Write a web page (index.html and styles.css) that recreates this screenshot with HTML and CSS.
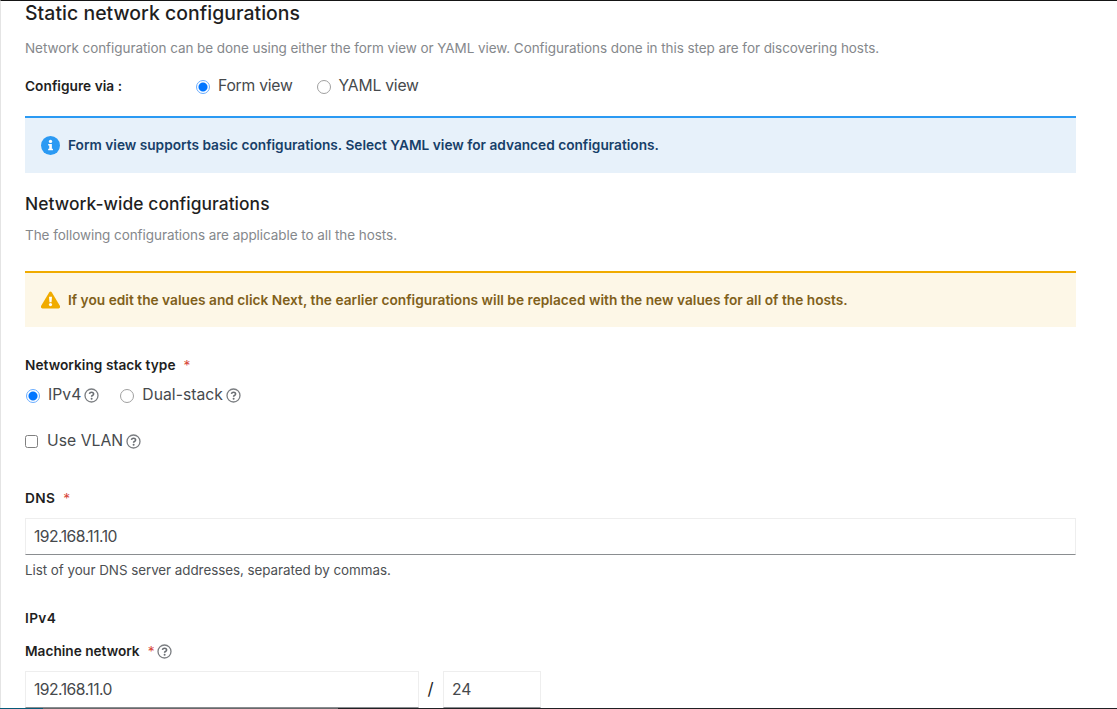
FILE: index.html
```html
<!DOCTYPE html>
<html lang="en">
<head>
<meta charset="utf-8">
<title>Static network configurations</title>
<link rel="stylesheet" href="styles.css">
</head>
<body>
<svg class="defs" aria-hidden="true">
  <symbol id="help" viewBox="0 0 15 15">
    <circle cx="7.5" cy="7.5" r="6.5" fill="none" stroke="#7b7e82" stroke-width="1.3"/>
    <path d="M5.4 5.9Q5.8 4.2 7.5 4.2Q9.6 4.2 9.6 6Q9.6 7 8.4 7.5Q7.6 7.9 7.6 8.7" fill="none" stroke="#6a6e73" stroke-width="1.6"/>
    <circle cx="7.6" cy="10.7" r="1" fill="#6a6e73"/>
  </symbol>
</svg>
<main class="page">
  <h1 class="title">Static network configurations</h1>
  <p class="lead">Network configuration can be done using either the form view or YAML view. Configurations done in this step are for discovering hosts.</p>
  <div class="configure">
    <span class="label configure-label">Configure via :</span>
    <label class="option"><span class="radio checked"></span><span class="option-text tight">Form view</span></label>
    <label class="option yaml"><span class="radio"></span><span class="option-text tight">YAML view</span></label>
  </div>
  <div class="alert info">
    <svg class="alert-icon" viewBox="0 0 18 18"><circle cx="9" cy="9" r="9" fill="#2b9af3"/><circle cx="9" cy="5.1" r="1.6" fill="#fff"/><path d="M6.8 7.5h3.5v4.5h1v1.6H6.8V12h1V9.1h-1z" fill="#fff"/></svg>
    <span class="alert-info-text">Form view supports basic configurations. Select YAML view for advanced configurations.</span>
  </div>
  <h2 class="subtitle">Network-wide configurations</h2>
  <p class="applies">The following configurations are applicable to all the hosts.</p>
  <div class="alert warning">
    <svg class="alert-icon" viewBox="0 0 18 18"><path d="M7.7 1.4Q9 -.4 10.3 1.4L18 14.3Q18.5 16.2 16.7 16.5H1.3Q-.5 16.2 0 14.3Z" fill="#f0ab00"/><path d="M7.6 5.5h2.8L10 10.6H8z" fill="#fff"/><circle cx="9" cy="12.9" r="1.5" fill="#fff"/></svg>
    <span class="alert-warning-text">If you edit the values and click Next, the earlier configurations will be replaced with the new values for all of the hosts.</span>
  </div>
  <div class="label stack-label">Networking stack type<span class="required">*</span></div>
  <div class="stack">
    <label class="option"><span class="radio checked"></span><span class="option-text">IPv4</span><svg class="help"><use href="#help"/></svg></label>
    <label class="option dual"><span class="radio"></span><span class="option-text">Dual-stack</span><svg class="help"><use href="#help"/></svg></label>
  </div>
  <label class="vlan"><span class="checkbox"></span><span class="option-text">Use VLAN</span><svg class="help"><use href="#help"/></svg></label>
  <div class="label dns-label"><span class="caps">DNS</span><span class="required">*</span></div>
  <div class="input">192.168.11.10</div>
  <p class="hint">List of your DNS server addresses, separated by commas.</p>
  <div class="label ip-label"><span class="caps">IPv4</span></div>
  <div class="label machine-label">Machine network<span class="required">*</span><svg class="help"><use href="#help"/></svg></div>
  <div class="network">
    <div class="input address">192.168.11.0</div>
    <span class="slash">/</span>
    <div class="input prefix">24</div>
  </div>
</main>
<footer class="edge"><span class="edge-teal"></span><span class="edge-gray"></span></footer>
</body>
</html>
```
FILE: styles.css
```css
* { box-sizing: border-box; }
body {
  margin: 0;
  height: 709px;
  overflow: hidden;
  position: relative;
  background: #fff;
  color: #1f1f1f;
  font-family: Inter, "Liberation Sans", sans-serif;
  white-space: nowrap;
}
h1, h2, p { margin: 0; }
.defs { position: absolute; width: 0; height: 0; }
.page {
  height: 709px;
  padding: 0 41px 0 24px;
  border-top: 1px solid #151515;
  border-left: 1px solid #e4e4e4;
}
.title { height: 26px; line-height: 25px; font-size: 19.4px; font-weight: 450; letter-spacing: 0.05px; }
.lead, .applies { color: #85888c; font-size: 13.5px; letter-spacing: -0.065px; }
.lead { height: 20px; line-height: 20px; margin-top: 11px; }
.label { display: flex; align-items: center; height: 20px; font-size: 13.7px; font-weight: 600; letter-spacing: 0.03px; }
.configure { display: flex; align-items: center; height: 24px; margin-top: 16px; }
.configure-label { width: 171px; }
.option, .vlan, .stack { display: flex; align-items: center; }
.option-text { color: #46494c; font-size: 15.7px; line-height: 24px; letter-spacing: 0.03px; }
.tight { letter-spacing: -0.23px; }
.radio { width: 14px; height: 14px; margin: 1px 8px 0 0; border: 1px solid #a0a0a0; border-radius: 50%; background: #fff; }
.checked { border-color: #69adff; background: radial-gradient(circle, #0075ff 0 4px, #fff 5px); }
.yaml { margin-left: 24px; }
.alert { display: flex; align-items: center; height: 56px; padding-left: 16px; border-top: 2px solid; font-size: 13.7px; font-weight: 600; }
.alert-icon { width: 19px; height: 19px; margin-right: 8px; }
.info { height: 57px; margin-top: 18px; padding-bottom: 1px; border-color: #2b9af3; background: #e7f1fa; color: #173f69; }
.warning { margin-top: 25px; border-color: #f0ab00; background: #fdf7e7; color: #80601a; }
.alert-info-text { letter-spacing: 0; }
.alert-warning-text { letter-spacing: 0.02px; }
.subtitle { height: 24px; line-height: 24px; margin-top: 19px; font-size: 17.4px; font-weight: 450; letter-spacing: 0.06px; }
.applies { height: 20px; line-height: 20px; margin-top: 9px; margin-bottom: 26px; letter-spacing: -0.058px; }
.applies + .warning { margin-top: 0; }
.stack-label { margin-top: 28px; }
.required { margin-left: 8px; width: 6px; color: #d7473b; font-weight: 400; }
.stack { height: 24px; margin-top: 8px; padding-left: 1px; }
.dual { margin-left: 21px; }
.help { width: 15px; height: 15px; margin-left: 3px; }
.vlan { height: 24px; margin-top: 22px; }
.checkbox { width: 13px; height: 13px; margin-right: 9px; border: 1px solid #808080; border-radius: 2.5px; }
.dns-label { margin-top: 35px; }
.caps { letter-spacing: 0.35px; }
.input { display: flex; align-items: center; height: 37px; padding-left: 8px; border: 1px solid #eee; border-bottom-color: #8a8d90; color: #46494c; font-size: 15.7px; letter-spacing: -0.52px; }
.dns-label + .input { margin-top: 10px; }
.hint { height: 20px; line-height: 20px; margin-top: 5px; color: #4d5053; font-size: 13.4px; letter-spacing: -0.045px; }
.ip-label { margin-top: 28px; }
.machine-label { margin-top: 13px; }
.machine-label { letter-spacing: -0.02px; }
.network { display: flex; margin-top: 10px; }
.address { width: 394px; }
.slash { width: 24px; line-height: 37px; padding-right: 1px; text-align: center; font-size: 17px; }
.prefix { width: 98px; letter-spacing: 0; }
/* strip along the bottom of the window */
.edge { position: absolute; left: 0; right: 0; bottom: 0; display: flex; height: 1px; background: #202124; }
.edge-teal { width: 43px; background: #075a78; }
.edge-gray { width: 295px; background: #68696b; }
```
